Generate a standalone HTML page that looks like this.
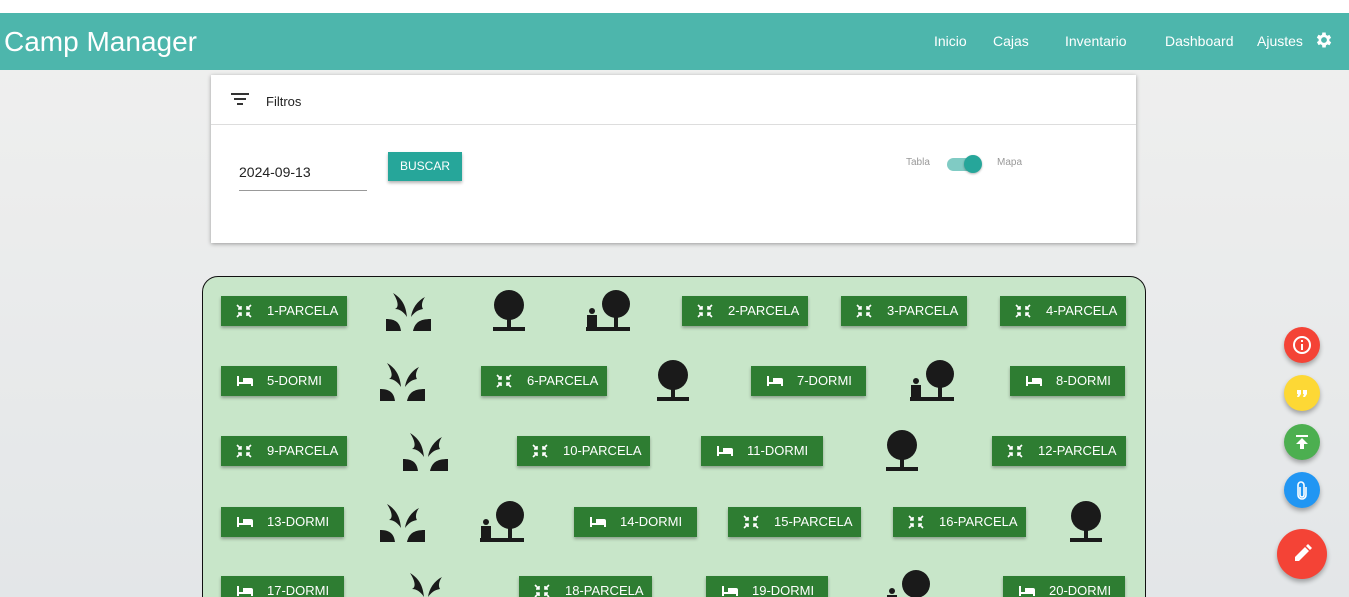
<!DOCTYPE html><html style="height:597px;overflow:hidden"><head><meta charset="utf-8"><style>
*{box-sizing:border-box}html,body{margin:0;width:1349px;height:597px;overflow:hidden}body{background:linear-gradient(#f0f0ef,#e3e6e8);font-family:"Liberation Sans",sans-serif;position:relative}
.top{position:absolute;left:0;top:0;width:1349px;height:13px;background:#fff}
.nav{position:absolute;left:0;top:13px;width:1349px;height:57px;background:#4db6ac;color:#fff}
.nav .t{position:absolute;left:4px;top:13px;font-size:28px}
.nav a{position:absolute;top:20px;font-size:14px}
.card{position:absolute;left:211px;top:75px;width:925px;height:168px;background:#fff;box-shadow:0 1px 4px rgba(0,0,0,.35)}
.map{position:absolute;left:202px;top:276px;width:944px;height:340px;background:#c8e6c9;border:1px solid #111;border-radius:16px}
.b{position:absolute;height:30px;background:#2e7d32;color:#fff;font-size:13px;line-height:30px;box-shadow:0 2px 3px rgba(0,0,0,.3);padding-left:46px}
.b svg{position:absolute;left:15px;top:8px}
.i{position:absolute}
.fab{position:absolute;border-radius:50%;box-shadow:0 3px 5px rgba(0,0,0,.3)}
</style></head><body>
<div class="top"></div>
<div class="nav"><div class="t">Camp Manager</div>
<a style="left:934px">Inicio</a><a style="left:993px">Cajas</a><a style="left:1065px">Inventario</a><a style="left:1165px">Dashboard</a><a style="left:1257px">Ajustes</a>
<svg style="position:absolute;left:1314px;top:17px" width="20" height="20" viewBox="0 0 24 24"><path fill="#fff" d="M19.4 13a7.5 7.5 0 000-2l2.1-1.6-2-3.5-2.5 1a7 7 0 00-1.7-1L15 3h-4l-.4 2.7a7 7 0 00-1.7 1l-2.5-1-2 3.5L6.6 11a7.5 7.5 0 000 2l-2.1 1.6 2 3.5 2.5-1a7 7 0 001.7 1L11 21h4l.4-2.7a7 7 0 001.7-1l2.5 1 2-3.5zM13 15.5a3.5 3.5 0 110-7 3.5 3.5 0 010 7z" transform="translate(-1 0)"/></svg></div>
<div class="card">
<svg style="position:absolute;left:20px;top:17px" width="18" height="14"><path d="M0 2h18M3 7h12M6 12h6" stroke="#333" stroke-width="2"/></svg>
<div style="position:absolute;left:55px;top:19px;font-size:13px;color:#222">Filtros</div>
<div style="position:absolute;left:0;top:49px;width:100%;border-top:1px solid #ddd"></div>
<div style="position:absolute;left:28px;top:89px;font-size:14px;color:#222">2024-09-13</div>
<div style="position:absolute;left:28px;top:115px;width:128px;border-top:1px solid #999"></div>
<div style="position:absolute;left:177px;top:77px;width:74px;height:29px;background:#26a69a;color:#fff;font-size:12px;line-height:29px;text-align:center;box-shadow:0 2px 3px rgba(0,0,0,.3)">BUSCAR</div>
<div style="position:absolute;left:695px;top:82px;font-size:10px;color:#999">Tabla</div>
<div style="position:absolute;left:736px;top:83px;width:32px;height:13px;border-radius:7px;background:#80cbc4"></div>
<div style="position:absolute;left:753px;top:80px;width:18px;height:18px;border-radius:50%;background:#26a69a;box-shadow:0 1px 2px rgba(0,0,0,.3)"></div>
<div style="position:absolute;left:786px;top:82px;font-size:10px;color:#999">Mapa</div>
</div>
<div class="map"></div>
<div id="m"></div>
<div class="fab" style="left:1284px;top:327px;width:36px;height:36px;background:#f44336"><svg width="36" height="36"><circle cx="18" cy="18" r="8" fill="none" stroke="#fff" stroke-width="2"/><path d="M18 17v6M18 13v2" stroke="#fff" stroke-width="2"/></svg></div>
<div class="fab" style="left:1284px;top:375px;width:36px;height:36px;background:#fdd835"><svg width="36" height="36"><path d="M13 15h4v4l-2 3h-2l1-3h-1zM19 15h4v4l-2 3h-2l1-3h-1z" fill="#fff"/></svg></div>
<div class="fab" style="left:1284px;top:424px;width:36px;height:36px;background:#4caf50"><svg width="36" height="36"><path d="M12 11h12v2H12zM18 14l6 6h-4v5h-4v-5h-4z" fill="#fff"/></svg></div>
<div class="fab" style="left:1284px;top:472px;width:36px;height:36px;background:#2196f3"><svg width="36" height="36"><path d="M16 15v8a2 2 0 004 0v-10a3 3 0 00-6 0v10a4 4 0 008 0v-8" fill="none" stroke="#fff" stroke-width="1.6"/></svg></div>
<div class="fab" style="left:1277px;top:529px;width:50px;height:50px;background:#f44336"><svg width="50" height="50"><path d="M18 32v-4l10-10 4 4-10 10zM29 17l2-2 4 4-2 2z" fill="#fff"/></svg></div>
<script>
const P='<svg width="16" height="14" viewBox="0 0 16 14"><path d="M1 1l4 4M5 2v3H2M15 1l-4 4M11 2v3h3M1 13l4-4M5 12V9H2M15 13l-4-4M11 12V9h3" stroke="#fff" stroke-width="1.6" fill="none"/></svg>';
const D='<svg width="18" height="14" viewBox="0 0 18 14"><path d="M1 2h2v6h4V4h8a2 2 0 012 2v6h-2v-2H3v2H1z" fill="#fff"/><circle cx="5" cy="6" r="1.5" fill="#2e7d32"/></svg>';
const G='<svg width="48" height="40" viewBox="0 0 48 40"><path d="M1 28c10 0 14 4 15 12H1zM46 28c-12 0-16 4-18 12h18zM8 2c10 6 13 14 14 24-4-6-8-8-12-8 5-2 2-10-2-16zM40 6c-8 4-13 12-14 20 3-4 6-7 12-8-2-3-1-8 2-12z" fill="#1a1a1a"/></svg>';
const T='<svg width="34" height="44" viewBox="0 0 34 44"><circle cx="17" cy="16" r="15" fill="#1a1a1a"/><path d="M15 28h4v11h-4zM1 38h32v4H1z" fill="#1a1a1a"/></svg>';
const PT='<svg width="48" height="44" viewBox="0 0 48 44"><circle cx="31" cy="15" r="14" fill="#1a1a1a"/><path d="M29 26h4v13h-4zM1 38h44v4H1zM2 26h10v12H2z" fill="#1a1a1a"/><circle cx="7" cy="22" r="3" fill="#1a1a1a"/></svg>';
const rows=[[311,[['b',221,347,'1-PARCELA',P],['g',385],['t',492],['p',585],['b',682,808,'2-PARCELA',P],['b',841,967,'3-PARCELA',P],['b',1000,1126,'4-PARCELA',P]]],
[381,[['b',221,337,'5-DORMI',D],['g',379],['b',481,607,'6-PARCELA',P],['t',656],['b',751,866,'7-DORMI',D],['p',909],['b',1010,1125,'8-DORMI',D]]],
[451,[['b',221,347,'9-PARCELA',P],['g',402],['b',517,650,'10-PARCELA',P],['b',701,823,'11-DORMI',D],['t',885],['b',992,1126,'12-PARCELA',P]]],
[522,[['b',221,344,'13-DORMI',D],['g',379],['p',479],['b',574,697,'14-DORMI',D],['b',728,861,'15-PARCELA',P],['b',893,1026,'16-PARCELA',P],['t',1069]]],
[591,[['b',221,344,'17-DORMI',D],['g',402],['b',519,652,'18-PARCELA',P],['b',706,828,'19-DORMI',D],['p',885],['b',1003,1125,'20-DORMI',D]]]];
let h='';for(const [y,items] of rows)for(const it of items){
if(it[0]=='b')h+=`<div class="b" style="left:${it[1]}px;top:${y-15}px;width:${it[2]-it[1]}px">${it[4]}${it[3]}</div>`;
else if(it[0]=='g')h+=`<div class="i" style="left:${it[1]}px;top:${y-20}px">${G}</div>`;
else if(it[0]=='t')h+=`<div class="i" style="left:${it[1]}px;top:${y-22}px">${T}</div>`;
else h+=`<div class="i" style="left:${it[1]}px;top:${y-22}px">${PT}</div>`;}
document.getElementById('m').innerHTML=h;
</script>
</body></html>
